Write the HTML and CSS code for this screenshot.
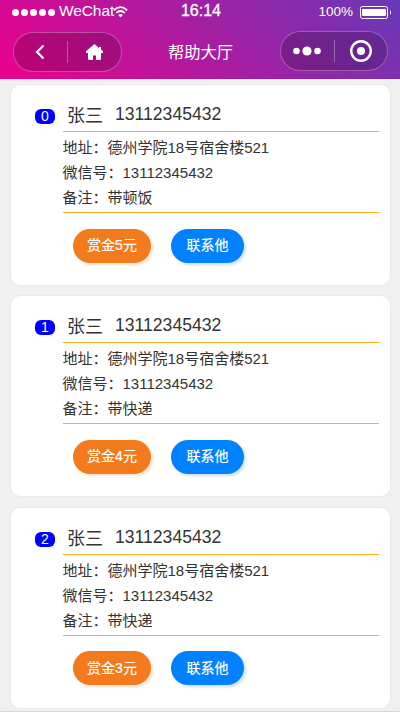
FILE: index.html
```html
<!DOCTYPE html>
<html lang="zh-CN">
<head>
<meta charset="utf-8">
<title>帮助大厅</title>
<link rel="stylesheet" href="styles.css">
</head>
<body>
<header class="header">
  <div class="status">
    <div class="carrier">
      <span class="signal"><i></i><i></i><i></i><i></i><i></i></span>
      <span class="carrier-name">WeChat</span>
      <svg class="wifi" width="15" height="12" viewBox="0 0 15 12" fill="none" stroke="#fff" stroke-width="1.7">
        <path d="M.8 4.3Q7.5-2 14.2 4.3M3.2 7Q7.5 3 11.8 7"/>
        <path d="M5.1 9.1Q7.5 7 9.9 9.1L7.5 11.5Z" fill="#fff" stroke="none"/>
      </svg>
    </div>
    <div class="time">16:14</div>
    <div class="power">
      <span>100%</span>
      <svg width="32" height="13" viewBox="0 0 32 13">
        <rect x=".5" y=".5" width="27" height="12" rx="2" fill="none" stroke="#fff"/>
        <rect x="2" y="3" width="24" height="7" rx="1" fill="#fff"/>
        <path d="M30 4Q32 6.5 30 9Z" fill="#fff"/>
      </svg>
    </div>
  </div>
  <nav class="nav">
    <div class="capsule capsule-left">
      <svg width="53" height="38" viewBox="0 0 53 38"><path d="M29.5 12.5L23 19L29.5 25.5" fill="none" stroke="#fff" stroke-width="2.2"/></svg>
      <span class="divider"></span>
      <svg width="53" height="38" viewBox="0 0 53 38"><path d="M26.5 11L18 18.2V20H20V25.5Q20 27 21.5 27H25V22.5H28V27H31.5Q33 27 33 25.5V20H35V18.2L33 16.5V14H31V15Z" fill="#fff"/></svg>
    </div>
    <h1 class="page-title">帮助大厅</h1>
    <div class="capsule capsule-right">
      <svg width="53" height="38" viewBox="0 0 53 38" fill="#fff"><circle cx="15.5" cy="19" r="3.3"/><circle cx="26" cy="19" r="4.6"/><circle cx="36.5" cy="19" r="3.3"/></svg>
      <span class="divider"></span>
      <svg width="52" height="38" viewBox="0 0 52 38"><circle cx="26" cy="19" r="9.8" fill="none" stroke="#fff" stroke-width="2.4"/><circle cx="26" cy="19" r="4" fill="#fff"/></svg>
    </div>
  </nav>
</header>
<main class="list">
  <article class="card">
    <div class="person"><span class="badge">0</span><span class="name">张三</span><span class="phone">13112345432</span></div>
    <div class="details">
      <p>地址：德州学院18号宿舍楼521</p>
      <p>微信号：13112345432</p>
      <p>备注：带顿饭</p>
    </div>
    <div class="actions"><button class="btn reward">赏金5元</button><button class="btn contact">联系他</button></div>
  </article>
  <article class="card">
    <div class="person"><span class="badge">1</span><span class="name">张三</span><span class="phone">13112345432</span></div>
    <div class="details">
      <p>地址：德州学院18号宿舍楼521</p>
      <p>微信号：13112345432</p>
      <p>备注：带快递</p>
    </div>
    <div class="actions"><button class="btn reward">赏金4元</button><button class="btn contact">联系他</button></div>
  </article>
  <article class="card">
    <div class="person"><span class="badge">2</span><span class="name">张三</span><span class="phone">13112345432</span></div>
    <div class="details">
      <p>地址：德州学院18号宿舍楼521</p>
      <p>微信号：13112345432</p>
      <p>备注：带快递</p>
    </div>
    <div class="actions"><button class="btn reward">赏金3元</button><button class="btn contact">联系他</button></div>
  </article>
</main>
</body>
</html>
```
FILE: styles.css
```css
* { box-sizing: border-box; }

body {
  margin: 0;
  height: 712px;
  overflow: hidden;
  background: #f0f0f0;
  border-bottom: 1px solid #d8d8d8;
  color: #333;
  font-family: "Liberation Sans", "Noto Sans CJK SC", sans-serif;
}

svg { display: block; flex: none; }

.header {
  height: 79px;
  color: #fff;
  background: linear-gradient(45deg, #ec008c, #6739b6);
}

.status {
  display: grid;
  grid-template-columns: 1fr auto 1fr;
  height: 24px;
  padding: 0 8px 0 12px;
  align-items: center;
}

.carrier { display: flex; align-items: center; font-size: 15.5px; line-height: 22px; }
.carrier-name { margin: -2px 0 0 4px; letter-spacing: -.1px; }
.wifi { margin-left: -1px; }
.signal { display: flex; gap: 2px; }
.signal i { width: 7px; height: 7px; border-radius: 50%; background: #fff; }
.time { margin: -2px 2px 0 0; font-size: 16px; line-height: 24px; -webkit-text-stroke: .3px #fff; }
.power { display: flex; justify-content: flex-end; align-items: center; gap: 7px; font-size: 13.5px; }
.power span { margin-top: -2px; }

.nav {
  display: grid;
  grid-template-columns: 1fr auto 1fr;
  align-items: start;
  padding: 7px 12px 0 13px;
}

.capsule {
  display: flex;
  align-items: center;
  height: 40px;
  border: 1px solid rgba(255, 255, 255, .28);
  border-radius: 20px;
  background: rgba(0, 0, 0, .18);
}
.capsule-left { width: 109px; margin-top: 1px; }
.capsule-right { width: 108px; justify-self: end; }
.divider { flex: none; width: 1px; height: 22px; background: rgba(255, 255, 255, .3); }
.page-title { margin: 8px 0 0; font-size: 16.3px; font-weight: 400; line-height: 26px; }

.list {
  display: flex;
  flex-direction: column;
  gap: 11.3px;
  padding: 6px 10px 0 11px;
}

.card {
  height: 200px;
  padding: 12px 11px 0 24px;
  background: #fff;
  border-radius: 9px;
  box-shadow: 0 0 1px 1px rgba(0, 0, 0, .03);
}

.person {
  display: flex;
  align-items: center;
  height: 34px;
  font-size: 17.6px;
}
.badge {
  width: 20px;
  height: 15px;
  margin-top: 5px;
  border-radius: 6px;
  background: #00f;
  color: #fff;
  font-size: 14px;
  line-height: 15px;
  text-align: center;
}
.name { width: 48px; margin-left: 12px; font-size: 18px; }
.phone { padding-top: 1px; }

.details {
  height: 82px;
  margin-left: 28px;
  padding-top: 3px;
  border: solid #ffb020;
  border-width: 1px 0;
  font-size: 15px;
  line-height: 25px;
}
.details p { margin: 0 0 0 -.5px; }

.actions { display: flex; gap: 20px; margin: 15.6px 0 0 38px; }
.btn {
  height: 34px;
  padding: 0 0 1px;
  border: 0;
  border-radius: 17px;
  color: #fff;
  font: 14px/32px "Liberation Sans", "Noto Sans CJK SC", sans-serif;
  -webkit-text-stroke: .2px #fff;
}
.reward { width: 78px; background: #f37b1d; box-shadow: 2px 2px 3px rgba(217, 109, 26, .2); }
.contact { width: 73px; background: #0081ff; box-shadow: 2px 2px 3px rgba(0, 102, 204, .2); }
```
